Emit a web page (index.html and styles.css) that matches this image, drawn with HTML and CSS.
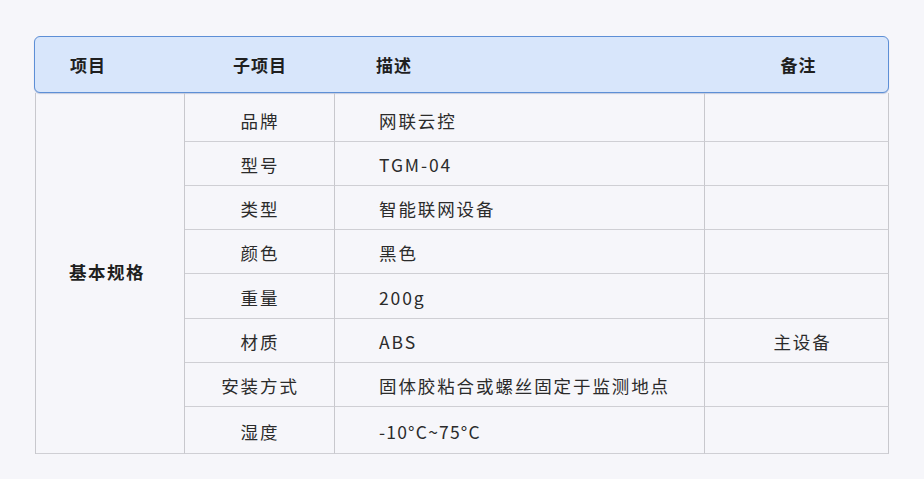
FILE: index.html
```html
<!DOCTYPE html>
<html lang="zh-CN">
<head>
<meta charset="utf-8">
<title>规格表</title>
<link rel="stylesheet" href="styles.css">
</head>
<body>
<div class="sheet">
  <div class="head">
    <div class="hc hc-item">项目</div>
    <div class="hc hc-sub">子项目</div>
    <div class="hc hc-desc">描述</div>
    <div class="hc hc-note">备注</div>
  </div>
  <div class="body">
    <div class="cell group">基本规格</div>
    <div class="cell sub first">品牌</div>
    <div class="cell desc first"><span>网联云控</span></div>
    <div class="cell note first"></div>

    <div class="cell sub">型号</div>
    <div class="cell desc"><span>TGM-04</span></div>
    <div class="cell note"></div>

    <div class="cell sub">类型</div>
    <div class="cell desc"><span>智能联网设备</span></div>
    <div class="cell note"></div>

    <div class="cell sub">颜色</div>
    <div class="cell desc"><span>黑色</span></div>
    <div class="cell note"></div>

    <div class="cell sub">重量</div>
    <div class="cell desc"><span>200g</span></div>
    <div class="cell note"></div>

    <div class="cell sub">材质</div>
    <div class="cell desc"><span>ABS</span></div>
    <div class="cell note">主设备</div>

    <div class="cell sub">安装方式</div>
    <div class="cell desc"><span>固体胶粘合或螺丝固定于监测地点</span></div>
    <div class="cell note"></div>

    <div class="cell sub">湿度</div>
    <div class="cell desc"><span class="temp">-10°C~75°C</span></div>
    <div class="cell note"></div>
  </div>
</div>
</body>
</html>
```

FILE: styles.css
```css
html, body {
  margin: 0;
  padding: 0;
  background: #f6f6fa;
}
body {
  font-family: "Noto Sans CJK SC", "Noto Sans", sans-serif;
  color: #333;
}
.sheet {
  width: 855px;
  padding: 36px 0 0 34px;
}
.head {
  box-sizing: border-box;
  height: 57px;
  display: grid;
  grid-template-columns: 150px 150px 370px 185px;
  align-items: center;
  background: #d8e6fb;
  border: 1.5px solid #5d8fd6;
  border-radius: 6px;
  box-shadow: 0 1px 1px rgba(40, 70, 140, 0.25);
  font-size: 17px;
  font-weight: 700;
  color: #1f1f1f;
  letter-spacing: 1px;
}
.hc-item { padding-left: 35px; }
.hc-sub { text-align: center; }
.hc-desc { padding-left: 41px; }
.hc-note { text-align: center; padding-left: 2px; }

.body {
  margin-left: 1px;
  width: 853px;
  display: grid;
  grid-template-columns: 149px 150px 370px 184px;
  grid-template-rows: 49px 44px 44px 44px 45px 44px 44px 47px;
  border-left: 1px solid #c8c8cd;
  font-size: 17.5px;
  letter-spacing: 1.9px;
  color: #2b2b2b;
}
.cell {
  box-sizing: border-box;
  display: flex;
  align-items: center;
  padding-top: 2px;
  white-space: nowrap;
  border-right: 1px solid #c8c8cd;
  border-bottom: 1px solid #cfcfd4;
}
.cell.first { padding-top: 7px; }
.group {
  grid-row: 1 / span 8;
  padding-top: 0;
  padding-bottom: 4px;
  padding-left: 33px;
  font-weight: 700;
  color: #1f1f1f;
  letter-spacing: 1.5px;
}
.sub { justify-content: center; padding-left: 1px; }
.desc { justify-content: flex-start; padding-left: 44px; }
.note { justify-content: center; padding-left: 12px; }
.temp { letter-spacing: 1.2px; }
```
